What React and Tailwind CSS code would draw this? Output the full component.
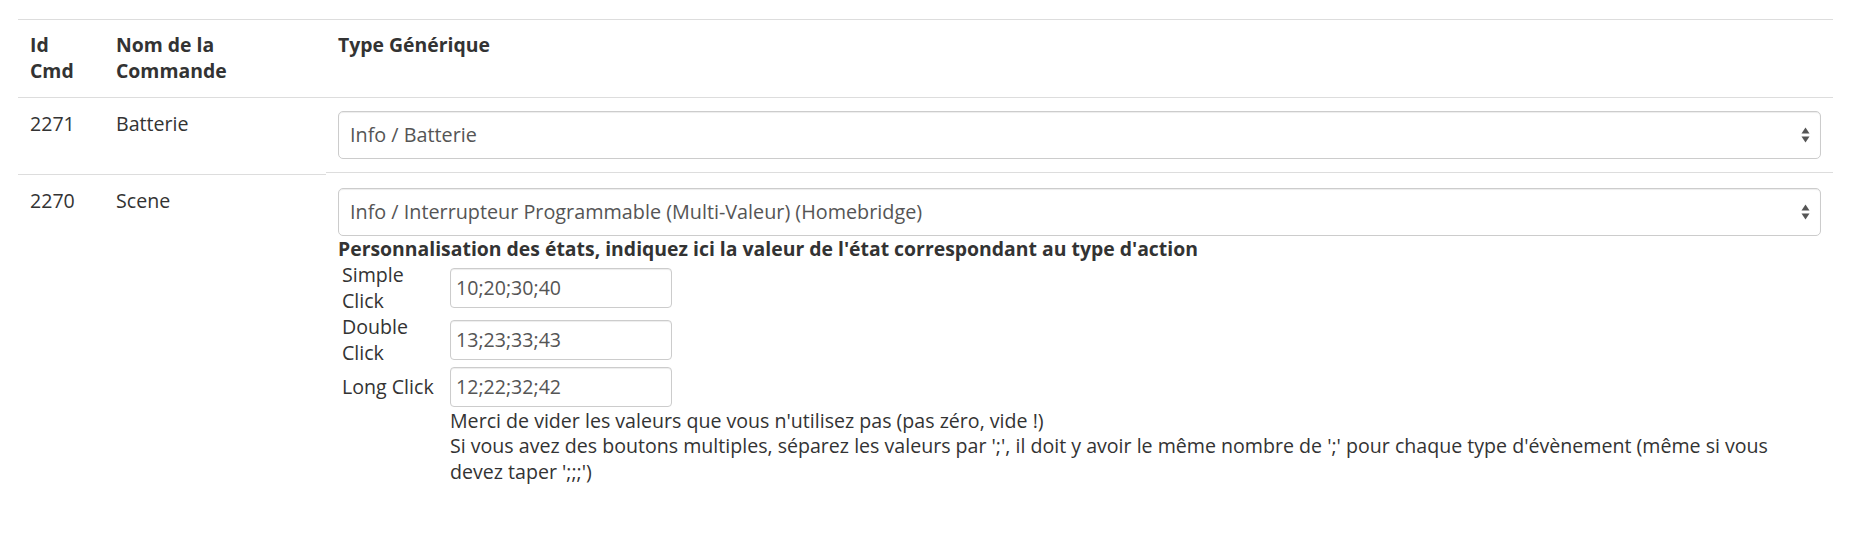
import React from "react";

const states = [
  { label: ["Simple", "Click"], value: "10;20;30;40", h: "h-[52px]" },
  { label: ["Double", "Click"], value: "13;23;33;43", h: "h-[52px]" },
  { label: ["Long Click"], value: "12;22;32;42", h: "h-[42px]" },
];

function SelectArrows() {
  return (
    <svg width="9" height="16" viewBox="0 0 9 16" className="shrink-0">
      <path d="M4.5 0.5 L8.5 6.5 L0.5 6.5 Z" fill="#555" />
      <path d="M0.5 9.5 L8.5 9.5 L4.5 15.5 Z" fill="#555" />
    </svg>
  );
}

function FakeSelect({ value }) {
  return (
    <div className="flex h-[48px] items-center justify-between rounded-[5px] border border-[#ccc] bg-white pl-[11px] pr-[10px] text-[19.8px] text-[#555] shadow-[inset_0_1px_1px_rgba(0,0,0,0.075)]">
      <span className="truncate">{value}</span>
      <SelectArrows />
    </div>
  );
}

export default function App() {
  return (
    <div className="min-h-screen bg-white px-[18px] pt-[19px] font-['Open_Sans',sans-serif] text-[19.6px] leading-[25.7px] text-[#333]">
      {/* header */}
      <div className="flex h-[78px] border-t border-[#ddd] pt-[12px] text-[19.4px] font-bold">
        <div className="w-[86px] px-[12px]">
          Id
          <br />
          Cmd
        </div>
        <div className="w-[222px] px-[12px]">
          Nom de la
          <br />
          Commande
        </div>
        <div className="flex-1 px-[12px]">Type Générique</div>
      </div>

      {/* row 2271 */}
      <div className="flex h-[75px] border-t border-[#ddd] pt-[13px]">
        <div className="w-[86px] px-[12px]">2271</div>
        <div className="w-[222px] px-[12px]">Batterie</div>
        <div className="flex-1 px-[12px]">
          <FakeSelect value="Info / Batterie" />
        </div>
      </div>

      {/* row 2270 */}
      <div className="flex items-start">
        <div className="mt-[2px] w-[86px] border-t border-[#ddd] px-[12px] pt-[13px]">2270</div>
        <div className="mt-[2px] w-[222px] border-t border-[#ddd] px-[12px] pt-[13px]">Scene</div>
        <div className="flex-1 border-t border-[#ddd] px-[12px] pt-[15px]">
          <FakeSelect value="Info / Interrupteur Programmable (Multi-Valeur) (Homebridge)" />
          <div className="text-[19.4px] font-bold">
            Personnalisation des états, indiquez ici la valeur de l'état correspondant au type d'action
          </div>
          <div>
            {states.map((s) => (
              <div key={s.value} className={`flex items-center ${s.h}`}>
                <div className="w-[112px] shrink-0 whitespace-nowrap pl-[4px]">
                  {s.label.map((l, i) => (
                    <div key={i}>{l}</div>
                  ))}
                </div>
                <div className="flex h-[40px] w-[222px] items-center rounded-[4px] border border-[#ccc] bg-white px-[5px] text-[#555] shadow-[inset_0_1px_1px_rgba(0,0,0,0.075)]">
                  {s.value}
                </div>
              </div>
            ))}
            <div className="pl-[112px]">
              <div>Merci de vider les valeurs que vous n'utilisez pas (pas zéro, vide !)</div>
              <div>
                <span className="whitespace-nowrap">
                  Si vous avez des boutons multiples, séparez les valeurs par ';', il doit y avoir le même nombre de ';' pour chaque type d'évènement (même si vous
                </span>
                <br />
                devez taper ';;;')
              </div>
            </div>
          </div>
        </div>
      </div>
    </div>
  );
}
